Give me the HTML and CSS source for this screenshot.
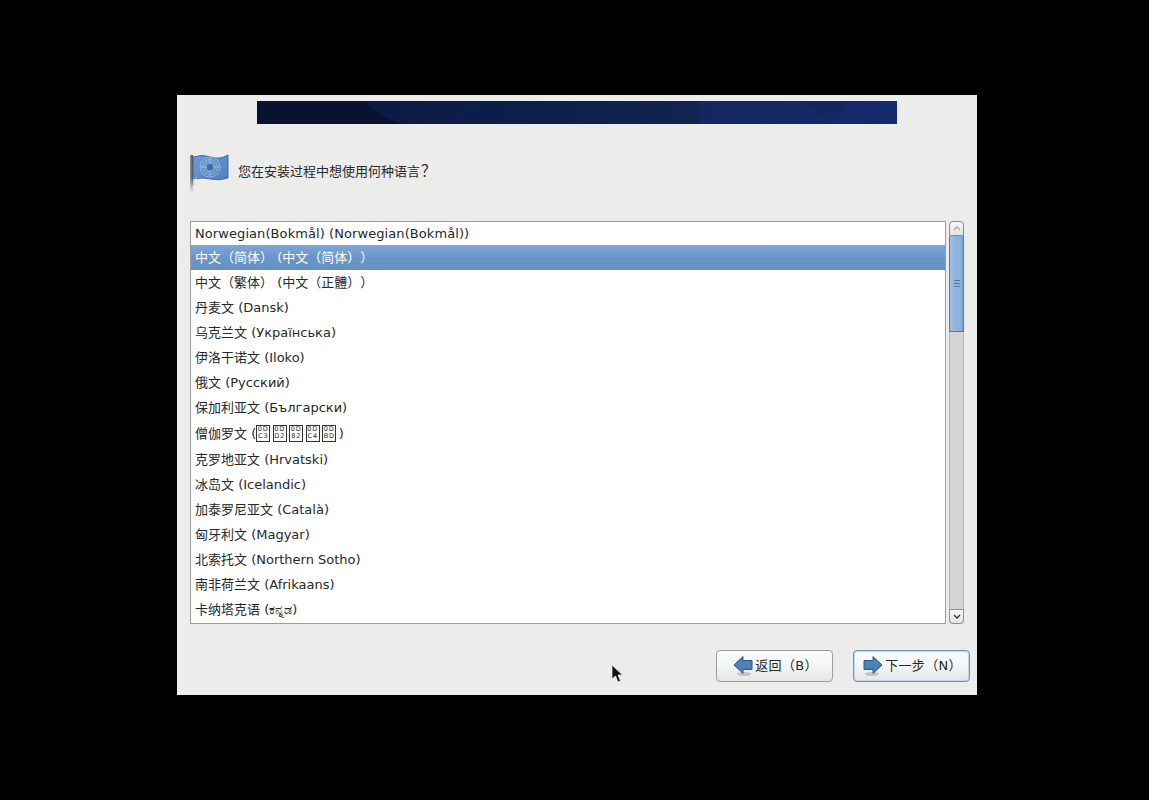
FILE: index.html
```html
<!DOCTYPE html>
<html lang="zh-CN">
<head>
    <meta charset="UTF-8">
    <title>安装</title>
    <link rel="stylesheet" href="styles.css">
</head>
<body>
    <div class="window">
        <svg class="banner" viewBox="0 0 640 23" preserveAspectRatio="none">
            <defs>
                <linearGradient id="bannerMid" gradientUnits="userSpaceOnUse" x1="120" x2="442" y1="0" y2="0">
                    <stop offset="0" stop-color="#0b1a45"/>
                    <stop offset="1" stop-color="#112350"/>
                </linearGradient>
                <linearGradient id="bannerRight" gradientUnits="userSpaceOnUse" x1="442" x2="640" y1="0" y2="0">
                    <stop offset="0" stop-color="#132662"/>
                    <stop offset="1" stop-color="#152a6b"/>
                </linearGradient>
            </defs>
            <rect width="640" height="23" fill="#0a1232"/>
            <path d="M108 0 C116 9 128 18 146 23 L442 23 L442 0 Z" fill="url(#bannerMid)"/>
            <path d="M190 23 L212 0 L232 0 L200 23 Z" fill="#0d1e4d"/>
            <path d="M442 0 L640 0 L640 23 L442 23 Z" fill="url(#bannerRight)"/>
            <path d="M545 0 L590 0 Q582 12 570 19 Q558 8 545 0 Z" fill="#13265f"/>
        </svg>

        <div class="prompt">
            <svg class="flag" viewBox="0 0 40 40" width="40" height="40">
                <defs>
                    <linearGradient id="pole" x1="0" x2="1" y1="0" y2="0">
                        <stop offset="0" stop-color="#9a9a96"/>
                        <stop offset="1" stop-color="#4a4a48"/>
                    </linearGradient>
                    <linearGradient id="poleFade" x1="0" x2="0" y1="0" y2="1">
                        <stop offset="0.6" stop-color="#ececea" stop-opacity="0"/>
                        <stop offset="1" stop-color="#ececea" stop-opacity="1"/>
                    </linearGradient>
                    <linearGradient id="cloth" x1="0" x2="1" y1="0" y2="1">
                        <stop offset="0" stop-color="#6e9bd2"/>
                        <stop offset="1" stop-color="#4f80bf"/>
                    </linearGradient>
                </defs>
                <rect x="0" y="2" width="3" height="38" fill="url(#pole)"/>
                <rect x="0" y="2" width="3" height="38" fill="url(#poleFade)"/>
                <path d="M3 4 Q12 1 21 4 T38 2 L38 25 Q30 28 21 26 T3 26 Z" fill="url(#cloth)" stroke="#3f6ba5" stroke-width="1"/>
                <g fill="none" stroke="#a9c2df" stroke-width="1" opacity=".75">
                    <circle cx="20" cy="14" r="10"/>
                    <circle cx="20" cy="14" r="7.500"/>
                    <circle cx="20" cy="14" r="5"/>
                    <path d="M20 4 V24 M10 14 H30"/>
                </g>
                <circle cx="20" cy="14" r="3" fill="#3a6aa8"/>
                <path d="M7 25 Q3 25 4 29 L2 36" fill="none" stroke="#c9c9c5" stroke-width="1"/>
            </svg>
            <span>您在安装过程中想使用何种语言<span class="qmark">？</span></span>
        </div>

        <div class="list-area">
            <div class="list">
                <div class="row first">Norwegian(Bokmål) (Norwegian(Bokmål))</div>
                <div class="row selected">中文（简体） (中文（简体））</div>
                <div class="row">中文（繁体） (中文（正體））</div>
                <div class="row">丹麦文 (Dansk)</div>
                <div class="row">乌克兰文 (Українська)</div>
                <div class="row">伊洛干诺文 (Iloko)</div>
                <div class="row">俄文 (Русский)</div>
                <div class="row">保加利亚文 (Български)</div>
                <div class="row tall">僧伽罗文 (<span class="tofu"><i>0D</i><i>C3</i></span><span class="tofu"><i>0D</i><i>D2</i></span><span class="tofu"><i>0D</i><i>82</i></span><span class="tofu"><i>0D</i><i>C4</i></span><span class="tofu"><i>0D</i><i>BD</i></span>)</div>
                <div class="row">克罗地亚文 (Hrvatski)</div>
                <div class="row">冰岛文 (Icelandic)</div>
                <div class="row">加泰罗尼亚文 (Català)</div>
                <div class="row">匈牙利文 (Magyar)</div>
                <div class="row">北索托文 (Northern Sotho)</div>
                <div class="row">南非荷兰文 (Afrikaans)</div>
                <div class="row">卡纳塔克语 (ಕನ್ನಡ)</div>
            </div>
            <div class="scrollbar">
                <div class="step step-up">
                    <svg viewBox="0 0 8 5" width="8" height="5"><path d="M1 4 L4 1 L7 4" fill="none" stroke="#a8a8a4" stroke-width="1.3"/></svg>
                </div>
                <div class="thumb"><div class="grip"></div></div>
                <div class="trough"></div>
                <div class="step step-down">
                    <svg viewBox="0 0 8 5" width="8" height="5"><path d="M1 1 L4 4 L7 1" fill="none" stroke="#2e3436" stroke-width="1.3"/></svg>
                </div>
            </div>
        </div>

        <div class="buttons">
            <button class="btn">
                <svg viewBox="0 0 20 22" width="20" height="22">
                    <ellipse cx="11" cy="19" rx="7" ry="2" fill="#c4c4c0"/>
                    <path d="M1 10 L10 1.500 L10 5.500 L19 5.500 L19 14.500 L10 14.500 L10 18.500 Z" fill="#4d7fb8" stroke="#2b5a94" stroke-width="1"/>
                </svg>
                <span>返回（B）</span>
            </button>
            <button class="btn default">
                <svg viewBox="0 0 20 22" width="20" height="22">
                    <ellipse cx="9" cy="19" rx="7" ry="2" fill="#c4c4c0"/>
                    <path d="M19 10 L10 1.500 L10 5.500 L1 5.500 L1 14.500 L10 14.500 L10 18.500 Z" fill="#4d7fb8" stroke="#2b5a94" stroke-width="1"/>
                </svg>
                <span>下一步（N）</span>
            </button>
        </div>
    </div>

    <svg class="cursor" viewBox="0 0 13 20" width="13" height="20">
        <path d="M1 1 L1 15 L4.500 12 L7 18 L9.500 17 L7 11 L11.500 11 Z" fill="#111" stroke="#e8e8e8" stroke-width=".8"/>
    </svg>
</body>
</html>
```

FILE: styles.css
```css
html, body {
    margin: 0;
    height: 800px;
    background-color: #000;
    overflow: hidden;
}

body {
    font-family: "DejaVu Sans", "Noto Sans CJK SC", sans-serif;
    font-size: 13px;
    color: #26292b;
    text-spacing-trim: space-all;
}

.window {
    position: relative;
    width: 800px;
    height: 600px;
    margin: 95px 0 0 177px;
    background-color: #ececea;
    padding-top: 6px;
    box-sizing: border-box;
}

.banner {
    display: block;
    width: 640px;
    height: 23px;
    margin: 0 auto;
}

.prompt {
    display: flex;
    align-items: flex-start;
    gap: 8px;
    margin: 29px 0 0 13px;
    height: 40px;
}

.prompt > span {
    margin-top: 9px;
    line-height: 18px;
}

.qmark {
    margin-left: 1px;
    font-family: "Noto Sans CJK TC", sans-serif;
    font-size: 15px;
    line-height: 15px;
}

.flag {
    flex: none;
}

.list-area {
    display: flex;
    gap: 3px;
    margin: 28px 13px 0;
    height: 403px;
}

.list {
    width: 756px;
    box-sizing: border-box;
    border: 1px solid #9d9c9b;
    background-color: #fff;
    overflow: hidden;
}

.row {
    height: 25px;
    line-height: 25px;
    padding-left: 4px;
    white-space: nowrap;
}

.row.first {
    height: 23px;
    line-height: 23px;
    letter-spacing: 0.08px;
}

.row.tall {
    height: 27px;
    line-height: 27px;
}

.row.selected {
    color: #fff;
    background: linear-gradient(#7ea5d8, #6a96c9 50%, #6690c4);
}

.tofu {
    display: inline-block;
    overflow: hidden;
    width: 14px;
    height: 17px;
    margin-right: 2.5px;
    box-sizing: border-box;
    border: 1px solid #2e3436;
    font-size: 6.5px;
    letter-spacing: 0.8px;
    line-height: 7px;
    text-align: center;
    vertical-align: -4px;
}

.tofu i {
    display: block;
    font-style: normal;
}

.scrollbar {
    display: flex;
    flex-direction: column;
    width: 15px;
    height: 403px;
    background-color: #d6d5d3;
    border-radius: 3px;
}

.step {
    display: flex;
    align-items: center;
    justify-content: center;
    height: 15px;
    box-sizing: border-box;
    border: 1px solid #8f8e8c;
    background: linear-gradient(#f7f7f6, #e4e3e1);
}

.step-up {
    border-radius: 4px 4px 0 0;
}

.step-down {
    border-radius: 0 0 4px 4px;
}

.thumb {
    display: flex;
    align-items: center;
    justify-content: center;
    height: 96px;
    box-sizing: border-box;
    border: 1px solid #4f78ae;
    border-top: none;
    background: linear-gradient(90deg, #a3c0e4, #8fb2de 40%, #8fb2de 80%, #7ba0d0);
}

.grip {
    width: 6px;
    height: 7px;
    background: repeating-linear-gradient(#4f78ae 0 1px, transparent 1px 3px);
}

.trough {
    flex: 1;
    border-left: 1px solid #b5b4b2;
    border-right: 1px solid #b5b4b2;
}

.buttons {
    display: flex;
    justify-content: flex-end;
    gap: 20px;
    margin: 26px 7px 0 0;
}

.btn {
    display: flex;
    align-items: center;
    justify-content: center;
    gap: 2px;
    width: 117px;
    height: 32px;
    padding: 0 0 0 2px;
    font: inherit;
    color: #26292b;
    border: 1px solid #9d9c9b;
    border-radius: 4px;
    background: linear-gradient(#fafbfc, #f4f5f6 50%, #e3e5e8);
}

.btn span {
    line-height: 16px;
    letter-spacing: 0.3px;
}

.btn.default {
    border-color: #6a93c6;
    box-shadow: inset 0 0 0 1px #c5d5ea;
}

.cursor {
    position: absolute;
    left: 611px;
    top: 664px;
}
```
